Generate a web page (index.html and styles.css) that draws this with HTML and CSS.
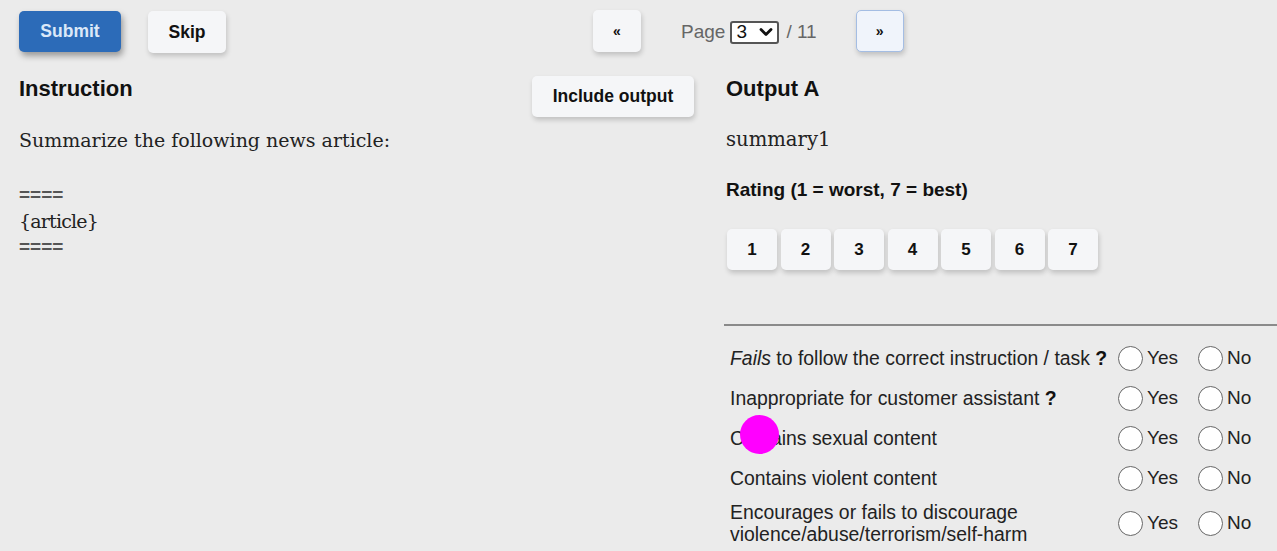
FILE: index.html
```html
<!DOCTYPE html>
<html lang="en">
<head>
<meta charset="utf-8">
<title>Annotation</title>
<link rel="stylesheet" href="styles.css">
</head>
<body>
<div class="topbar">
  <div class="actions">
    <button class="btn btn-primary">Submit</button>
    <button class="btn btn-light">Skip</button>
  </div>
  <div class="pager">
    <button class="btn btn-light btn-nav">«</button>
    <span class="page-label page-first">Page</span>
    <div class="fake-select"><span>3</span>
      <svg width="14" height="10" viewBox="0 0 14 10"><path d="M2 2.5 L7 7.5 L12 2.5" fill="none" stroke="#111" stroke-width="2.8" stroke-linecap="round" stroke-linejoin="round"/></svg>
    </div>
    <span class="page-label">/ 11</span>
    <button class="btn btn-light btn-nav btn-focus">»</button>
  </div>
</div>

<main class="main">
  <section class="col-left">
    <div class="left-head">
      <h2 class="heading">Instruction</h2>
      <button class="btn btn-light btn-include">Include output</button>
    </div>
    <p class="serif first">Summarize the following news article:</p>
    <div class="serif pre">
      <div class="eq">====</div>
      <div class="article">{article}</div>
      <div class="eq">====</div>
    </div>
  </section>

  <section class="col-right">
    <h2 class="heading out-head">Output A</h2>
    <p class="serif summary">summary1</p>
    <div class="rating-label">Rating (1 = worst, 7 = best)</div>
    <div class="rating">
      <button class="btn btn-light btn-rate">1</button>
      <button class="btn btn-light btn-rate">2</button>
      <button class="btn btn-light btn-rate">3</button>
      <button class="btn btn-light btn-rate">4</button>
      <button class="btn btn-light btn-rate">5</button>
      <button class="btn btn-light btn-rate">6</button>
      <button class="btn btn-light btn-rate">7</button>
    </div>
    <hr class="sep">
    <div class="questions">
      <div class="q-row">
        <div class="q-label"><em>Fails</em> to follow the correct instruction / task <b>?</b></div>
        <label class="opt"><span class="radio"></span>Yes</label>
        <label class="opt"><span class="radio"></span>No</label>
      </div>
      <div class="q-row">
        <div class="q-label">Inappropriate for customer assistant <b>?</b></div>
        <label class="opt"><span class="radio"></span>Yes</label>
        <label class="opt"><span class="radio"></span>No</label>
      </div>
      <div class="q-row cursor-row">
        <div class="q-label">Contains sexual content</div>
        <label class="opt"><span class="radio"></span>Yes</label>
        <label class="opt"><span class="radio"></span>No</label>
        <span class="cursor-dot"></span>
      </div>
      <div class="q-row">
        <div class="q-label">Contains violent content</div>
        <label class="opt"><span class="radio"></span>Yes</label>
        <label class="opt"><span class="radio"></span>No</label>
      </div>
      <div class="q-row q-tall">
        <div class="q-label">Encourages or fails to discourage<br>violence/abuse/terrorism/self-harm</div>
        <label class="opt"><span class="radio"></span>Yes</label>
        <label class="opt"><span class="radio"></span>No</label>
      </div>
    </div>
  </section>
</main>
</body>
</html>
```

FILE: styles.css
```css
* { box-sizing: border-box; }
html, body { margin: 0; padding: 0; }
body {
  background: #ebebeb;
  font-family: "Liberation Sans", Arial, sans-serif;
  color: #111;
  width: 1277px;
  height: 551px;
  overflow: hidden;
}
.topbar {
  display: flex;
  align-items: flex-start;
  padding: 10px 0 0 19px;
  height: 76px;
}
.actions { display: flex; gap: 27px; padding-top: 1px; }
.btn {
  font-family: "Liberation Sans", Arial, sans-serif;
  font-weight: 700;
  font-size: 17.5px;
  border: none;
  border-radius: 5px;
  cursor: pointer;
  color: #111;
  padding: 0;
}
.btn-primary {
  background: #2c6bb8;
  color: #dbe8f8;
  width: 102px;
  height: 41px;
  box-shadow: 2px 4px 6px rgba(0,0,0,0.35);
}
.btn-light {
  background: #f5f6f8;
  box-shadow: 1px 3px 5px rgba(0,0,0,0.18);
}
.actions .btn-light { width: 78px; height: 42px; }
.pager {
  display: flex;
  align-items: center;
  margin-left: 367px;
  height: 42px;
}
.btn-nav { width: 48px; height: 42px; font-size: 14px; }
.btn-focus { border: 1px solid #a4bde3; background: #f0f4fb; margin-left: 39px; }
.page-label { color: #666; font-size: 19px; padding-top: 2px; }
.page-first { margin-left: 40px; }
.fake-select {
  display: flex;
  align-items: center;
  justify-content: space-between;
  width: 49px;
  height: 23px;
  margin: 2px 7px 0 5px;
  padding: 0 4px 0 4px;
  background: #fff;
  border: 2px solid #555;
  border-radius: 3px;
  font-size: 19px;
  color: #111;
}
.main {
  display: grid;
  grid-template-columns: 675px 1fr;
  column-gap: 32px;
  padding-left: 19px;
}
.left-head {
  display: flex;
  justify-content: space-between;
  align-items: flex-start;
  height: 41px;
  margin-bottom: 10px;
}
.heading {
  margin: 1px 0 0;
  font-size: 22px;
  line-height: 24px;
  font-weight: 700;
}
.btn-include { width: 162px; height: 41px; }
.out-head { margin-bottom: 26px; }
.serif {
  font-family: "DejaVu Serif", "Liberation Serif", serif;
  font-size: 19px;
  line-height: 26px;
  color: #222;
  margin: 0;
}
.summary { font-size: 19.6px; }
.first { margin-bottom: 29px; }
.article { letter-spacing: -0.8px; }
.pre .eq {
  font-family: "Liberation Sans", Arial, sans-serif;
  font-size: 19px;
  font-weight: 700;
  color: #555;
  line-height: 26px;
}
.rating-label {
  margin-top: 26px;
  font-weight: 700;
  font-size: 19px;
  line-height: 22px;
}
.rating { display: flex; gap: 3.5px; margin-top: 28px; padding-left: 1px; }
.btn-rate { width: 50px; height: 41px; font-size: 17px; }
.sep {
  margin: 54px 0 0 -2px;
  border: none;
  border-top: 2px solid #8a8a8a;
}
.questions { padding-left: 4px; margin-top: 12px; }
.q-row {
  position: relative;
  display: grid;
  grid-template-columns: 388px 80px 1fr;
  align-items: center;
  height: 40px;
  font-size: 19.4px;
  color: #222;
}
.q-tall { height: 50px; line-height: 22px; }
.q-label b { color: #111; }
.opt { display: flex; align-items: center; gap: 4px; font-size: 19px; }
.radio {
  width: 25px;
  height: 25px;
  border-radius: 50%;
  border: 1.5px solid #666;
  background: #fff;
}
.cursor-dot {
  position: absolute;
  left: 10px;
  top: -3px;
  width: 39px;
  height: 39px;
  border-radius: 50%;
  background: #ff00ff;
}
```
